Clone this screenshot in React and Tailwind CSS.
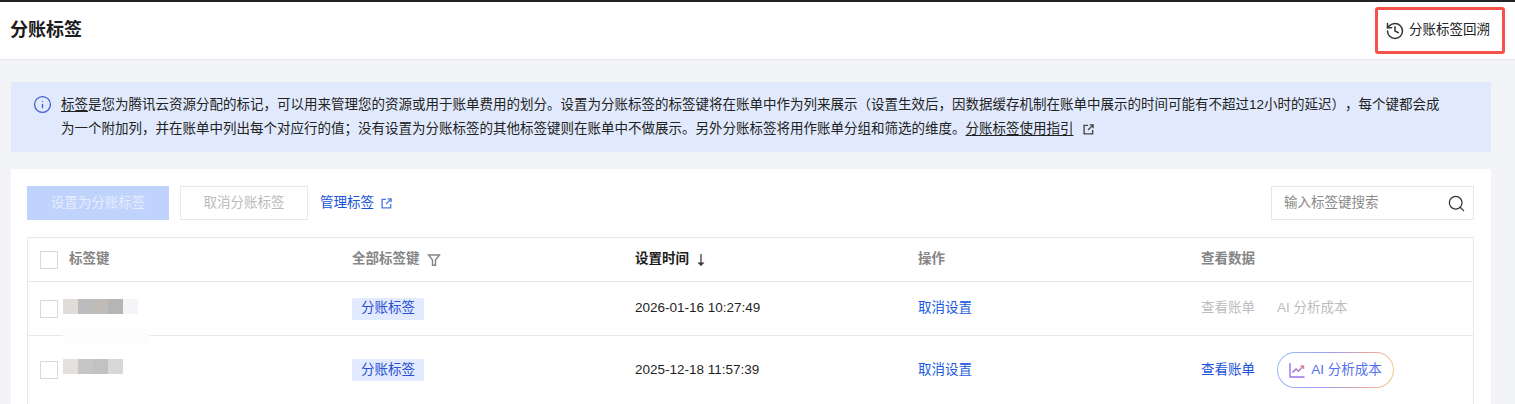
import { History, Info, Search } from 'lucide-react'

const GRID = 'grid grid-cols-[324px_283px_283px_283px_1fr]'

function ExternalIcon({ className }) {
  return (
    <svg viewBox="0 0 12 12" fill="none" stroke="currentColor" strokeWidth="1.5" className={className}>
      <path d="M5.5 1.5H1.2v9.3h9.3V6.5" />
      <path d="M5.5 6.5 10.5 1.5M7.3 1h3.7v3.7" />
    </svg>
  )
}

function Checkbox({ className = '' }) {
  return <span className={`block w-[18px] h-[18px] bg-white border border-[#d5d9e3] shrink-0 ${className}`} />
}

function Mosaic({ colors }) {
  return (
    <div className="flex">
      {colors.map((c, i) => (
        <span key={i} className={`block w-[15px] h-[15px] ${c}`} />
      ))}
    </div>
  )
}

function Tag() {
  return (
    <span className="inline-flex items-center justify-center w-[72px] h-[22px] rounded-[2px] bg-[#e2eaff] text-[#2a4fd0]">
      分账标签
    </span>
  )
}

function AiButton() {
  return (
    <button className="block w-[117px] h-[36px] rounded-full p-px bg-[linear-gradient(100deg,#9cc0f8_0%,#9f9bee_45%,#e8a3a0_75%,#f0d28c_100%)]">
      <span className="flex items-center justify-center gap-[6px] w-full h-full rounded-full bg-white">
        <svg viewBox="0 0 16 16" fill="none" strokeWidth="1.4" className="w-[16px] h-[16px]">
          <defs>
            <linearGradient id="ai-chart" x1="0" y1="1" x2="1" y2="0">
              <stop offset="0" stopColor="#7b6cf0" />
              <stop offset="1" stopColor="#e27fa0" />
            </linearGradient>
          </defs>
          <path d="M1 1v14h14.5" stroke="#9a73e8" />
          <path d="M3.5 10.5 7 7l2.5 2 5-5M11.5 4h3v3" stroke="url(#ai-chart)" />
        </svg>
        <span className="text-[#5470ee]">AI 分析成本</span>
      </span>
    </button>
  )
}

export default function App() {
  return (
    <div className="h-[404px] overflow-hidden bg-[#f2f4f8] text-[13.5px] font-['Liberation_Sans','Noto_Sans_CJK_SC',sans-serif]">
      <div className="h-[2px] bg-[#222222]" />
      <header className="h-[58px] bg-white border-b border-[#e6e8ee] flex items-center justify-between pl-[10px] pr-[10px]">
        <h1 className="text-[18px] font-bold text-[#1c1c1c]">分账标签</h1>
        <button className="flex items-center gap-[4px] h-[47px] w-[130px] pl-[7px] border-[3px] border-[#f4524a] rounded-[3px] text-[#222222]">
          <History size={20} strokeWidth={1.8} className="text-[#333333]" />
          <span>分账标签回溯</span>
        </button>
      </header>

      <main className="pl-[11px] pt-[22px]">
        <div className="w-[1480px] h-[70px] bg-[#e1eafd] flex pl-[22px] pt-[11px] pr-[44px] text-[#222222] leading-[24px]">
          <Info size={19} strokeWidth={1.6} className="text-[#3d5bd0] mt-[2px] mr-[9px] shrink-0" />
          <p className="[text-spacing-trim:space-all]">
            <span className="underline underline-offset-2">标签</span>
            是您为腾讯云资源分配的标记，可以用来管理您的资源或用于账单费用的划分。设置为分账标签的标签键将在账单中作为列来展示（设置生效后，因数据缓存机制在账单中展示的时间可能有不超过12小时的延迟），每个键都会成为一个附加列，并在账单中列出每个对应行的值；没有设置为分账标签的其他标签键则在账单中不做展示。另外分账标签将用作账单分组和筛选的维度。
            <span className="underline underline-offset-2">分账标签使用指引</span>
            <ExternalIcon className="inline-block w-[11px] h-[11px] ml-[9px] text-[#444444]" />
          </p>
        </div>

        <section className="w-[1480px] mt-[17px] bg-white px-[16px] pt-[17px] h-[300px]">
          <div className="flex items-center h-[34px]">
            <button className="w-[142px] h-[34px] bg-[#bfd3fd] text-[#e6edfc]">设置为分账标签</button>
            <button className="w-[128px] h-[34px] ml-[11px] bg-white border border-[#e6e8ee] text-[#bbbbbb]">取消分账标签</button>
            <a className="ml-[12px] text-[#1a52d8]">管理标签</a>
            <ExternalIcon className="w-[11px] h-[11px] ml-[7px] text-[#4d78e4]" />
            <div className="ml-auto mr-[1px] w-[203px] h-[34px] border border-[#e6e8ee] flex items-center justify-between pl-[12px] pr-[7px] text-[#8a8a8a]">
              <span>输入标签键搜索</span>
              <Search size={19} strokeWidth={1.6} className="text-[#333333]" />
            </div>
          </div>

          <div className="relative mt-[17px] w-[1447px] h-[200px] border border-[#e6e8ee] border-b-0">
            <div className={`${GRID} h-[44px] items-center border-b border-[#e6e8ee] font-bold text-[#858585]`}>
              <div className="flex items-center pl-[12px] gap-[11px]">
                <Checkbox />
                <span>标签键</span>
              </div>
              <div className="flex items-center gap-[7px]">
                <span>全部标签键</span>
                <svg viewBox="0 0 14 14" fill="none" stroke="currentColor" strokeWidth="1.4" className="w-[14px] h-[14px]">
                  <path d="M1.5 2h11L8.5 7v5.2h-3V7z" />
                </svg>
              </div>
              <div className="flex items-center gap-[7px] text-[#1c1c1c]">
                <span>设置时间</span>
                <svg viewBox="0 0 10 14" className="w-[10px] h-[14px] text-[#333333]" fill="currentColor">
                  <path d="M4.4 1h1.2v8.5H8.5L5 13 1.5 9.5h2.9z" />
                </svg>
              </div>
              <div>操作</div>
              <div>查看数据</div>
            </div>

            <div className={`${GRID} h-[54px] items-center border-b border-[#e6e8ee] text-[#1f1f1f]`}>
              <div className="flex items-start pl-[12px] gap-[5px] mb-[1px]">
                <Checkbox className="mt-[1px]" />
                <Mosaic colors={['bg-[#e0dcd8]', 'bg-[#bcbcbf]', 'bg-[#c0bbb6]', 'bg-[#b5b5b6]', 'bg-[#f4f5f8]']} />
              </div>
              <div><Tag /></div>
              <div>2026-01-16 10:27:49</div>
              <div className="text-[#1a5ae0]">取消设置</div>
              <div className="flex gap-[22px] text-[#bdbdbd]">
                <span>查看账单</span>
                <span>AI 分析成本</span>
              </div>
            </div>

            <div className={`${GRID} h-[68px] items-center text-[#1f1f1f]`}>
              <div className="flex items-start pl-[12px] gap-[5px] -mt-[3px]">
                <Checkbox className="mt-[2px]" />
                <Mosaic colors={['bg-[#e4e1dc]', 'bg-[#c6c6c8]', 'bg-[#c3c2c1]', 'bg-[#d7d8da]']} />
              </div>
              <div><Tag /></div>
              <div>2025-12-18 11:57:39</div>
              <div className="text-[#1a5ae0]">取消设置</div>
              <div className="flex items-center gap-[22px]">
                <span className="text-[#1a52d8]">查看账单</span>
                <AiButton />
              </div>
            </div>

            {/* faint leftover of the mosaic, lies over the row border */}
            <span className="absolute left-[35px] top-[91px] w-[86px] h-[15px] bg-[#fdfdfd]" />
          </div>
        </section>
      </main>
    </div>
  )
}
